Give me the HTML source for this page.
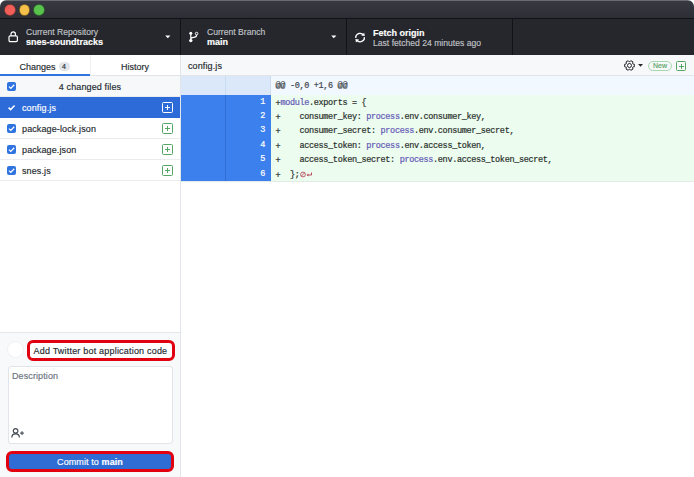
<!DOCTYPE html>
<html><head><meta charset="utf-8">
<style>
*{box-sizing:border-box;margin:0;padding:0}
html,body{width:694px;height:477px;overflow:hidden;background:#fff;font-family:"Liberation Sans",sans-serif;-webkit-text-stroke:0.15px}
.a{position:absolute;white-space:nowrap}
#win{position:absolute;left:0;top:0;width:694px;height:477px;border-radius:6.5px 6.5px 0 0;overflow:hidden;background:#fff}
#title{position:absolute;left:0;top:0;width:694px;height:19px;background:linear-gradient(#383941,#2d2e35);border-top:1px solid #6a6b72;border-bottom:1px solid #111217}
.tl{position:absolute;top:5px;width:9.4px;height:9.4px;border-radius:50%}
#toolbar{position:absolute;left:0;top:19px;width:694px;height:36px;background:#25272d;z-index:5}
.div{position:absolute;top:0;width:1px;height:36px;background:#121317}
.lbl{font-size:8.6px;color:#c0c2c6;line-height:10px}
.val{font-size:9px;font-weight:bold;color:#fff;line-height:10px}
#side{position:absolute;left:0;top:54px;width:180px;height:423px;background:#fff}
.tab{font-size:9px;color:#24292e;line-height:10px}
.row{position:absolute;left:0;width:180px;height:21px;border-bottom:1px solid #eaecef;font-size:9px;color:#24292e}
.cb{position:absolute;left:7px;top:6px;width:9px;height:9px;border-radius:2px;background:#2f73e0}
.fn{position:absolute;left:22px;top:5.7px;line-height:10px;letter-spacing:0.12px}
.plus{position:absolute;left:162px;top:5px;width:10.5px;height:10.5px;border:1px solid #55a565;border-radius:1.5px}
.plus:before{content:"";position:absolute;left:1.75px;top:3.75px;width:5px;height:1px;background:#55a565}
.plus:after{content:"";position:absolute;left:3.75px;top:1.75px;width:1px;height:5px;background:#55a565}
.wp{border-color:#fff}.wp:before,.wp:after{background:#fff}
#main{position:absolute;left:181px;top:54px;width:513px;height:423px;background:#fff}
.code{font-family:"Liberation Mono",monospace;font-size:8.5px;letter-spacing:-0.33px;color:#2b302c;line-height:10px;-webkit-text-stroke:0.2px}
.ln{position:absolute;left:0;width:90px;height:14.4px;background:#2f73e0}
.ln span{position:absolute;right:6px;top:2px;color:#fff;font-family:"Liberation Mono",monospace;font-size:8px;line-height:10px}
.cl{position:absolute;left:94px;white-space:pre}
.k{color:#6559b5}
</style></head><body>
<div id="win">
 <div id="title">
  <div class="tl" style="left:5.4px;top:4.4px;background:#f25f58;box-shadow:0 0 0 0.7px #9c3b36"></div>
  <div class="tl" style="left:19.8px;top:4.4px;background:#f4c04a;box-shadow:0 0 0 0.7px #9a7424"></div>
  <div class="tl" style="left:34.2px;top:4.4px;background:#58c24c;box-shadow:0 0 0 0.7px #2f7a2a"></div>
 </div>
 <div id="toolbar">
  <div class="div" style="left:180px"></div>
  <div class="div" style="left:346px"></div>
  <div class="div" style="left:512px"></div>
  <svg class="a" style="left:8px;top:11px" width="11" height="13" viewBox="0 0 11 13"><rect x="1" y="5.8" width="8.4" height="5.8" rx="1.3" fill="none" stroke="#fff" stroke-width="1.2"/><path d="M3 5.8V4.1a2.2 2.2 0 0 1 4.4 0v1.7" fill="none" stroke="#fff" stroke-width="1.2"/></svg>
  <div class="a lbl" style="left:26px;top:8px">Current Repository</div>
  <div class="a val" style="left:26px;top:17.5px">snes-soundtracks</div>
  <svg class="a" style="left:164.5px;top:16px" width="6" height="4"><path d="M0.2 0.4h5.2L2.8 3.2z" fill="#fff"/></svg>

  <svg class="a" style="left:187px;top:12px" width="12" height="12" viewBox="0 0 12 12"><circle cx="3.8" cy="2.3" r="1.5" fill="#fff"/><circle cx="3.8" cy="9.6" r="1.7" fill="#fff"/><circle cx="9.6" cy="2.6" r="1.3" fill="none" stroke="#fff" stroke-width="1"/><path d="M3.8 2.5v7M9.6 3.9c0 2-1.2 2.3-3 2.4c-1.6 0.1-2.8 0.5-2.8 2" fill="none" stroke="#fff" stroke-width="1.2"/></svg>
  <div class="a lbl" style="left:207px;top:8px">Current Branch</div>
  <div class="a val" style="left:207px;top:17.5px">main</div>
  <svg class="a" style="left:330.8px;top:16px" width="6" height="4"><path d="M0.2 0.4h5.2L2.8 3.2z" fill="#fff"/></svg>

  <svg class="a" style="left:354.8px;top:12px" width="10.2" height="13.2" viewBox="0 0 12 16" preserveAspectRatio="none"><path fill="#fff" d="M10.24 7.4a4.15 4.15 0 0 1-1.2 3.6 4.346 4.346 0 0 1-5.41.54L4.8 10.4.5 9.8l.6 4.2 1.31-1.26c2.360 1.74 5.7 1.57 7.84-.54a5.876 5.876 0 0 0 1.740-4.46l-1.75-.34zM2.96 5a4.346 4.346 0 0 1 5.41-.54L7.200 5.6l4.3.6-.6-4.2-1.31 1.26c-2.36-1.74-5.7-1.57-7.850.54C.5 5.03-.06 6.65.01 8.26l1.75.35A4.17 4.170 0 0 1 2.96 5z"/></svg>
  <div class="a val" style="left:373px;top:9px">Fetch origin</div>
  <div class="a lbl" style="left:373px;top:19px">Last fetched 24 minutes ago</div>
 </div>

 <div id="side">
  <div class="a" style="left:0;top:0;width:180px;height:22px;border-bottom:1px solid #e1e4e8"></div>
  <div class="a" style="left:90px;top:0;width:1px;height:21px;background:#eef0f2"></div>
  <div class="a tab" style="left:19.5px;top:7.5px">Changes</div>
  <div class="a" style="left:58.5px;top:8px;width:11px;height:9px;border-radius:4.5px;background:#e1e4e8;font-size:7px;line-height:9px;text-align:center;color:#24292e">4</div>
  <div class="a tab" style="left:121px;top:7.5px">History</div>
  <div class="a" style="left:0;top:20px;width:90px;height:2px;background:#2f73e0"></div>

  <div class="row" style="top:22px;background:#f6f8fa">
   <div class="cb" style="top:6px"><svg class="a" style="left:0;top:0" width="9" height="9"><path d="M2 4.6l1.8 1.8L7.2 2.8" fill="none" stroke="#fff" stroke-width="1.3"/></svg></div>
   <div class="a" style="left:0;width:180px;text-align:center;top:6px;line-height:10px;letter-spacing:0.12px">4 changed files</div>
  </div>
  <div class="row" style="top:43px;height:21px;background:#2d6bd8;color:#fff;border-bottom-color:#2d6bd8">
   <svg class="a" style="left:7px;top:6px" width="9" height="9"><path d="M1.6 4.6l2 2L7.6 2.4" fill="none" stroke="#fff" stroke-width="1.5"/></svg>
   <div class="fn">config.js</div><div class="plus wp"></div>
  </div>
  <div class="row" style="top:64px"><div class="cb"><svg class="a" style="left:0;top:0" width="9" height="9"><path d="M2 4.6l1.8 1.8L7.2 2.8" fill="none" stroke="#fff" stroke-width="1.3"/></svg></div><div class="fn">package-lock.json</div><div class="plus"></div></div>
  <div class="row" style="top:85px"><div class="cb"><svg class="a" style="left:0;top:0" width="9" height="9"><path d="M2 4.6l1.8 1.8L7.2 2.8" fill="none" stroke="#fff" stroke-width="1.3"/></svg></div><div class="fn">package.json</div><div class="plus"></div></div>
  <div class="row" style="top:106px"><div class="cb"><svg class="a" style="left:0;top:0" width="9" height="9"><path d="M2 4.6l1.8 1.8L7.2 2.8" fill="none" stroke="#fff" stroke-width="1.3"/></svg></div><div class="fn">snes.js</div><div class="plus"></div></div>

  <!-- commit area -->
  <div class="a" style="left:0;top:278px;width:180px;height:145px;background:#f8f9fb;border-top:1px solid #e4e6e9"></div>
  <div class="a" style="left:7px;top:287px;width:17px;height:17px;border-radius:50%;background:#fff;border:1px solid #eef0f2"></div>
  <div class="a" style="left:27.2px;top:285.8px;width:148px;height:20.8px;border:3.3px solid #e0000f;border-radius:6px;background:#fff"></div>
  <div class="a" style="left:33.5px;top:291.8px;font-size:9px;line-height:10px;color:#24292e;letter-spacing:0.2px">Add Twitter bot application code</div>
  <div class="a" style="left:7.5px;top:312px;width:165px;height:78px;border:1px solid #e1e4e8;border-radius:3px;background:#fff"></div>
  <div class="a" style="left:12px;top:317px;font-size:9px;line-height:10px;color:#6a737d;letter-spacing:0.1px">Description</div>
  <svg class="a" style="left:11px;top:373.5px" width="14" height="10" viewBox="0 0 14 10"><circle cx="4.6" cy="2.9" r="2.3" fill="none" stroke="#444b53" stroke-width="1.2"/><path d="M0.8 9.6c0-2.4 1.6-3.7 3.8-3.7s3.8 1.3 3.8 3.7" fill="none" stroke="#444b53" stroke-width="1.2"/><path d="M11 3.3v3.6M9.2 5.1h3.6" stroke="#444b53" stroke-width="1.1"/></svg>
  <div class="a" style="left:6px;top:396.5px;width:168px;height:21px;border:3px solid #e3000f;border-radius:6px;background:#2f6dd5"></div>
  <div class="a" style="left:0;top:402.5px;width:180px;text-align:center;font-size:9px;line-height:10px;color:#fff;letter-spacing:0.1px">Commit to <b>main</b></div>
 </div>
 <div class="a" style="left:180px;top:54px;width:1px;height:423px;background:#e1e4e8"></div>

 <div id="main">
  <div class="a" style="left:0;top:0;width:513px;height:22px;border-bottom:1px solid #e1e4e8;background:#f7f8fa"></div>
  <div class="a" style="left:7px;top:6.5px;font-size:9px;line-height:10px;color:#24292e;letter-spacing:0.12px">config.js</div>
  <svg class="a" style="left:442.5px;top:6px" width="11" height="11" viewBox="0 0 11 11"><path d="M8.88 3.99 L10.33 4.21 L10.33 6.79 L8.88 7.01 L8.50 7.67 L9.03 9.04 L6.80 10.33 L5.88 9.18 L5.12 9.18 L4.20 10.33 L1.97 9.04 L2.50 7.67 L2.12 7.01 L0.67 6.79 L0.67 4.21 L2.12 3.99 L2.50 3.33 L1.97 1.96 L4.20 0.67 L5.12 1.82 L5.88 1.82 L6.80 0.67 L9.03 1.96 L8.50 3.33Z" fill="none" stroke="#24292e" stroke-width="1" stroke-linejoin="round"/><circle cx="5.5" cy="5.5" r="2" fill="none" stroke="#24292e" stroke-width="1"/></svg>
  <svg class="a" style="left:457px;top:10px" width="5" height="3"><path d="M0 0h5L2.5 2.8z" fill="#24292e"/></svg>
  <div class="a" style="left:467px;top:7px;width:24px;height:10px;border:1px solid #a8d8b0;border-radius:5px;font-size:7px;line-height:8px;text-align:center;color:#5aa564">New</div>
  <div class="a plus" style="left:495px;top:7px;width:10px;height:10px"></div>

  <!-- diff -->
  <div class="a" style="left:0;top:22px;width:513px;height:19px;background:#f1f8ff"></div>
  <div class="a" style="left:0;top:22px;width:90px;height:19px;background:#dbe8f9;border-right:1px solid #cddcf1"></div>
  <div class="a" style="left:44px;top:22px;width:1px;height:19px;background:#c8dcf3"></div>
  <div class="a code" style="left:94.6px;top:27px;color:#3f464d">@@ -0,0 +1,6 @@</div>
  <div class="a" style="left:0;top:41px;width:513px;height:87px;background:#ecfdf0;border-bottom:1px solid #e2ebe5"></div>
  <div class="a" style="left:0;top:41px;width:90px;height:86.4px;background:#3b80ec"></div>
  <div class="a" style="left:44px;top:41px;width:1px;height:86.4px;background:#2f6dd3"></div>
    <div class="a code" style="left:0;top:42.5px;width:84px;text-align:right;color:#fff">1</div>
  <div class="a code" style="left:94.6px;top:43.5px;white-space:pre"><span style="position:relative;top:1.2px">+</span><span class="k">module</span>.exports = {</div>
  <div class="a code" style="left:0;top:56.9px;width:84px;text-align:right;color:#fff">2</div>
  <div class="a code" style="left:94.6px;top:57.9px;white-space:pre"><span style="position:relative;top:1.2px">+</span>    consumer_key: <span class="k">process</span>.env.consumer_key,</div>
  <div class="a code" style="left:0;top:71.3px;width:84px;text-align:right;color:#fff">3</div>
  <div class="a code" style="left:94.6px;top:72.3px;white-space:pre"><span style="position:relative;top:1.2px">+</span>    consumer_secret: <span class="k">process</span>.env.consumer_secret,</div>
  <div class="a code" style="left:0;top:85.7px;width:84px;text-align:right;color:#fff">4</div>
  <div class="a code" style="left:94.6px;top:86.7px;white-space:pre"><span style="position:relative;top:1.2px">+</span>    access_token: <span class="k">process</span>.env.access_token,</div>
  <div class="a code" style="left:0;top:100.1px;width:84px;text-align:right;color:#fff">5</div>
  <div class="a code" style="left:94.6px;top:101.1px;white-space:pre"><span style="position:relative;top:1.2px">+</span>    access_token_secret: <span class="k">process</span>.env.access_token_secret,</div>
  <div class="a code" style="left:0;top:114.5px;width:84px;text-align:right;color:#fff">6</div>
  <div class="a code" style="left:94.6px;top:115.5px;white-space:pre"><span style="position:relative;top:1.2px">+</span>  };<svg style="vertical-align:top;margin-top:1.5px;margin-left:1px" width="13" height="7" viewBox="0 0 13 7"><circle cx="3" cy="3.5" r="2.4" fill="none" stroke="#b84a5a" stroke-width="0.9"/><path d="M1.3 5.2L4.7 1.8" stroke="#b84a5a" stroke-width="0.9"/><path d="M11.5 1.5v2.5H7.2" fill="none" stroke="#b84a5a" stroke-width="1"/><path d="M6.6 4l1.8-1.6v3.2z" fill="#b84a5a"/></svg></div>
 </div>
</div>
</body></html>
